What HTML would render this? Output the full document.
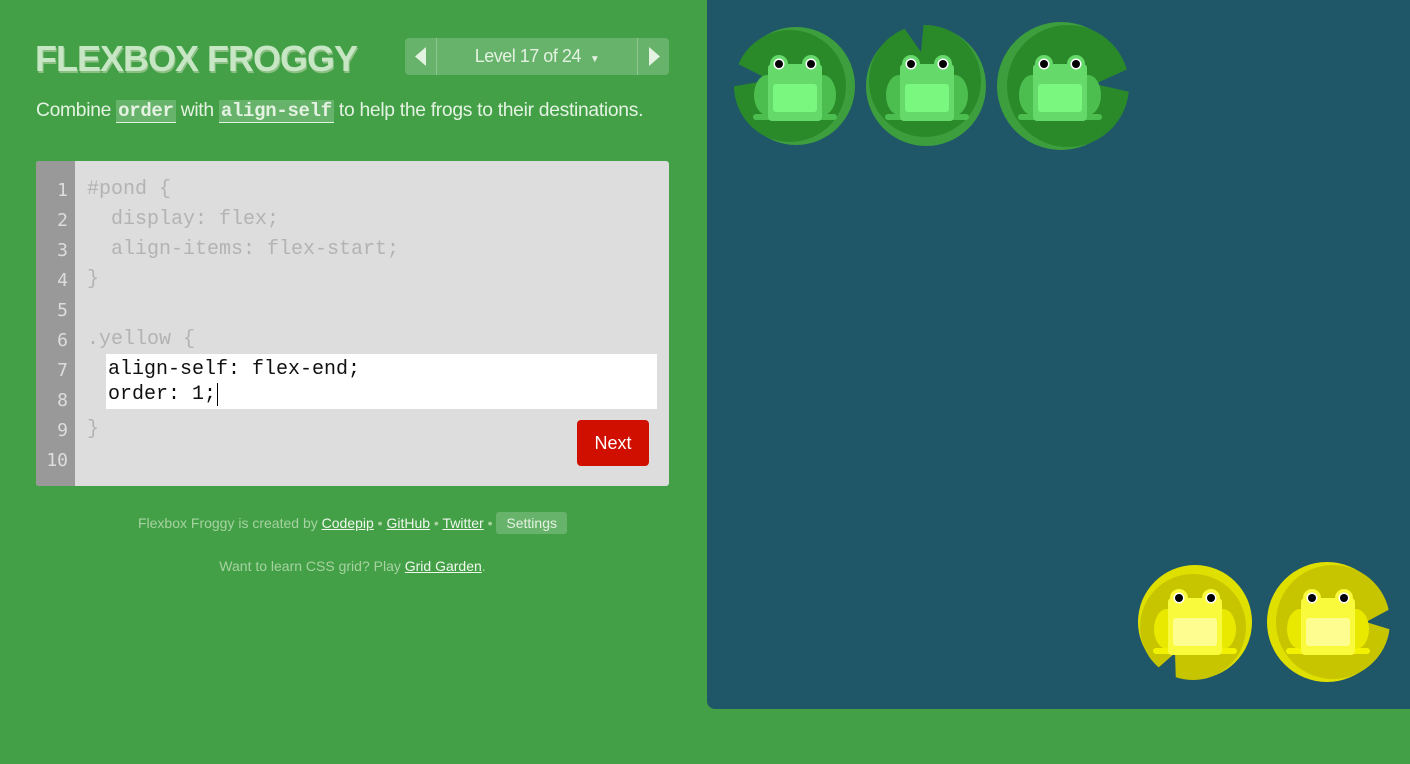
<!DOCTYPE html>
<html><head><meta charset="utf-8"><style>
*{margin:0;padding:0;box-sizing:border-box}
body{width:1410px;height:764px;background:#43a047;font-family:"Liberation Sans",sans-serif;position:relative;overflow:hidden}
.title{position:absolute;left:35px;top:38px;font-size:36px;font-weight:bold;color:#c6e6c4;letter-spacing:-1px;text-shadow:1px 2px 0 #8cbf84}
.nav{position:absolute;left:405px;top:38px;width:264px;height:37px;background:rgba(255,255,255,.2);border-radius:4px;color:#e4f2e2;font-size:18px}
.nav .l{position:absolute;left:0;top:0;width:32px;height:37px;border-right:1px solid rgba(255,255,255,.25)}
.nav .r{position:absolute;right:0;top:0;width:32px;height:37px;border-left:1px solid rgba(255,255,255,.25)}
.nav .t{position:absolute;left:32px;right:32px;top:8px;text-align:center;letter-spacing:-.5px}
.instr{position:absolute;left:36px;top:100px;font-size:19.3px;color:#e4f2e2;letter-spacing:-.3px}
.instr code{font-family:"Liberation Mono",monospace;font-weight:bold;background:rgba(255,255,255,.2);border-bottom:1px solid #e4f2e2;padding:0 2px;font-size:19px}
.ed{position:absolute;left:36px;top:161px;width:633px;height:325px;background:#ddd;border-radius:3px;overflow:hidden}
.gut{position:absolute;left:0;top:0;width:39px;height:325px;background:#999;color:#ddd;font-family:"DejaVu Sans Mono",monospace;font-size:18px;text-align:right;padding-right:7px;padding-top:15px;line-height:30px}
.code{position:absolute;left:51px;top:14px;font-family:"Liberation Mono",monospace;font-size:20px;line-height:30px;color:#b3b3b3;white-space:pre}
.inp{position:absolute;left:70px;top:193px;width:551px;height:55px;background:#fff;color:#111;font-family:"Liberation Mono",monospace;font-size:20px;line-height:25px;padding:3px 0 0 2px;white-space:pre}
.next{position:absolute;left:541px;top:259px;width:72px;height:46px;background:#d10f00;border-radius:4px;color:#fff;font-size:18px;text-align:center;line-height:46px}
.foot{position:absolute;left:0;width:705px;text-align:center;font-size:14px;color:#a6d3a1}
.foot u{color:#f0f8ee}
.set{display:inline-block;background:rgba(255,255,255,.2);color:#e4f2e2;padding:3px 10px;border-radius:3px}
.pond{position:absolute;left:707px;top:0;width:703px;height:709px;background:#1f5768;border-radius:0 0 0 8px}
</style></head><body>
<div class="title">FLEXBOX FROGGY</div>
<div class="nav"><div class="l"><svg width="32" height="37"><path d="M21 9 L10 18.5 L21 28Z" fill="#e4f2e2"/></svg></div><div class="t">Level 17 of 24 &nbsp;<span style="font-size:10px">▼</span></div><div class="r"><svg width="32" height="37"><path d="M11 9 L22 18.5 L11 28Z" fill="#e4f2e2"/></svg></div></div>
<div class="instr">Combine <code>order</code> with <code>align-self</code> to help the frogs to their destinations.</div>
<div class="ed">
<div class="gut">1<br>2<br>3<br>4<br>5<br>6<br>7<br>8<br>9<br>10</div>
<div class="code">#pond {
  display: flex;
  align-items: flex-start;
}

.yellow {


}</div>
<div class="inp">align-self: flex-end;
order: 1;<span style="border-left:1.5px solid #000;margin-left:1px"></span></div>
<div class="next">Next</div>
</div>
<div class="foot" style="top:512px">Flexbox Froggy is created by <u>Codepip</u> • <u>GitHub</u> • <u>Twitter</u> • <span class="set">Settings</span></div>
<div class="foot" style="top:558px">Want to learn CSS grid? Play <u>Grid Garden</u>.</div>
<div class="pond"></div>
<svg width="1410" height="764" style="position:absolute;left:0;top:0">
<defs>
<g id="fg"><ellipse cx="-28" cy="8" rx="13" ry="20" fill="#4cbe4f"/><ellipse cx="28" cy="8" rx="13" ry="20" fill="#4cbe4f"/>
<rect x="-42" y="27" width="84" height="6" rx="3" fill="#4cbe4f"/>
<circle cx="-16" cy="-23" r="9" fill="#66d96b"/><circle cx="16" cy="-23" r="9" fill="#66d96b"/>
<rect x="-27" y="-23" width="54" height="57" rx="4" fill="#66d96b"/>
<rect x="-22" y="-3" width="44" height="28" rx="3" fill="#7af77f"/>
<circle cx="-16" cy="-23" r="5.5" fill="#fff"/><circle cx="16" cy="-23" r="5.5" fill="#fff"/>
<circle cx="-16" cy="-23" r="4" fill="#000"/><circle cx="16" cy="-23" r="4" fill="#000"/></g>
<g id="fy"><ellipse cx="-28" cy="8" rx="13" ry="20" fill="#e9e900"/><ellipse cx="28" cy="8" rx="13" ry="20" fill="#e9e900"/>
<rect x="-42" y="27" width="84" height="6" rx="3" fill="#f2f200"/>
<circle cx="-16" cy="-23" r="9" fill="#fafa3c"/><circle cx="16" cy="-23" r="9" fill="#fafa3c"/>
<rect x="-27" y="-23" width="54" height="57" rx="4" fill="#fafa3c"/>
<rect x="-22" y="-3" width="44" height="28" rx="3" fill="#fdfd90"/>
<circle cx="-16" cy="-23" r="5.5" fill="#fff"/><circle cx="16" cy="-23" r="5.5" fill="#fff"/>
<circle cx="-16" cy="-23" r="4" fill="#000"/><circle cx="16" cy="-23" r="4" fill="#000"/></g>
</defs>
<circle cx="796" cy="86" r="59" fill="#3d9e3d"/><circle cx="790" cy="86" r="56" fill="#2a8a2a"/>
<path d="M730 60 L770 80 L730 87Z" fill="#1f5768"/>
<use href="#fg" x="795" y="87"/>
<circle cx="926" cy="86" r="60" fill="#3d9e3d"/><circle cx="925" cy="81" r="56" fill="#2a8a2a"/>
<path d="M902 25 L921 52 L924 20Z" fill="#1f5768"/>
<use href="#fg" x="927" y="87"/>
<circle cx="1061" cy="86" r="64" fill="#3d9e3d"/><circle cx="1068" cy="86" r="61" fill="#2a8a2a"/>
<path d="M1130 68 L1095 84 L1130 92Z" fill="#1f5768"/>
<use href="#fg" x="1060" y="87"/>
<circle cx="1195" cy="622" r="57" fill="#e0e000"/><circle cx="1193" cy="627" r="53" fill="#c7c400"/>
<path d="M1158 668 L1175 653 L1176 685 L1150 685Z" fill="#1f5768"/>
<use href="#fy" x="1195" y="621"/>
<circle cx="1327" cy="622" r="60" fill="#e0e000"/><circle cx="1333" cy="622" r="57" fill="#c7c400"/>
<path d="M1392 608 L1366 622 L1392 630Z" fill="#1f5768"/>
<use href="#fy" x="1328" y="621"/>
</svg>
</body></html>
